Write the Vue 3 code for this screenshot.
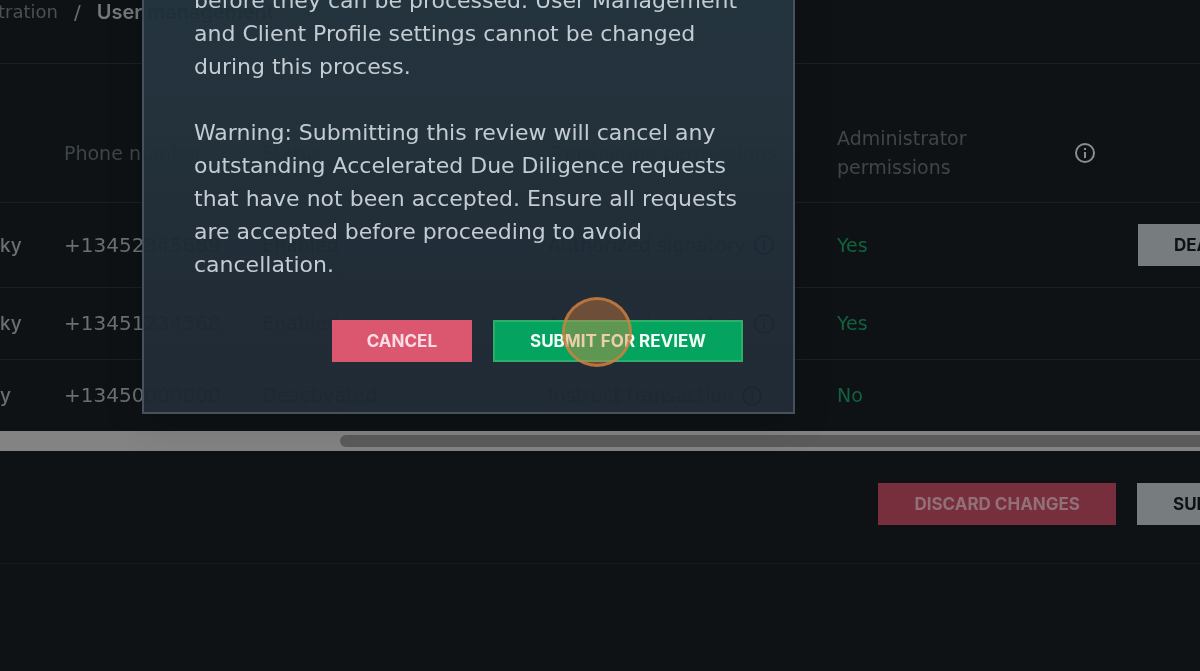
<script setup>
const rows = [
  { name: 'ky', phone: '+13452345689', status: 'Enabled', transaction: 'Authorized signatory', admin: 'Yes', action: 'DEACTIVATE', size: 'tall' },
  { name: 'ky', phone: '+13451234568', status: 'Enabled', transaction: 'Authorized signatory', admin: 'Yes', action: '', size: '' },
  { name: 'y', phone: '+13450000000', status: 'Deactivated', transaction: 'Instruct transaction', admin: 'No', action: '', size: '' }
]
const notice = [
  'before they can be processed. User Management',
  'and Client Profile settings cannot be changed',
  'during this process.'
]
const warning = [
  'Warning: Submitting this review will cancel any',
  'outstanding Accelerated Due Diligence requests',
  'that have not been accepted. Ensure all requests',
  'are accepted before proceeding to avoid',
  'cancellation.'
]
</script>

<template>
  <div class="page">
    <nav class="crumbs" aria-label="Breadcrumb">
      <a href="#">tration</a>
      <span class="slash">/</span>
      <strong>User management</strong>
    </nav>

    <main>
      <table>
        <colgroup>
          <col class="c-name"><col class="c-phone"><col class="c-status"><col class="c-trans"><col class="c-admin"><col>
        </colgroup>
        <thead>
          <tr>
            <th></th>
            <th>Phone number</th>
            <th>Status</th>
            <th>Transaction permissions</th>
            <th>
              <div class="admin-head">
                <span>Administrator permissions</span>
                <svg class="info bright" viewBox="0 0 20 20" aria-hidden="true"><circle cx="10" cy="10" r="9" /><path d="M10 9v6M10 5v2" /></svg>
              </div>
            </th>
            <th></th>
          </tr>
        </thead>
        <tbody>
          <tr v-for="row in rows" :key="row.phone" :class="row.size">
            <td class="name">{{ row.name }}</td>
            <td class="phone">{{ row.phone }}</td>
            <td class="dim">{{ row.status }}</td>
            <td class="dim">
              <div class="permission">
                <span>{{ row.transaction }}</span>
                <svg class="info" viewBox="0 0 20 20" aria-hidden="true"><circle cx="10" cy="10" r="9" /><path d="M10 9v6M10 5v2" /></svg>
              </div>
            </td>
            <td class="yes">{{ row.admin }}</td>
            <td><button v-if="row.action" class="btn grey" type="button">{{ row.action }}</button></td>
          </tr>
        </tbody>
      </table>
      <div class="track"><div class="thumb"></div></div>
      <div class="page-actions">
        <button class="btn discard" type="button">DISCARD CHANGES</button>
        <button class="btn grey" type="button">SUBMIT FOR REVIEW</button>
      </div>
    </main>

    <section class="modal" role="dialog" aria-label="Submit for review">
      <p><span v-for="line in notice" :key="line">{{ line }}</span></p>
      <p><span v-for="line in warning" :key="line">{{ line }}</span></p>
      <div class="modal-actions">
        <button class="btn cancel" type="button">CANCEL</button>
        <button class="btn submit" type="button">SUBMIT FOR REVIEW</button>
      </div>
    </section>
    <div class="pointer"></div>
  </div>
</template>

<style>
body { margin: 0; background: #0e1215; }
</style>

<style scoped>
.page {
  position: relative;
  min-height: 100vh;
  overflow: hidden;
  background: #0e1215;
  color: #6b6f72;
  font: 19px/29px "DejaVu Sans", Inter, sans-serif;
}
.crumbs {
  box-sizing: border-box;
  display: flex;
  align-items: flex-start;
  height: 64px;
  border-bottom: 1px solid #1a1f22;
  font-size: 18px;
  line-height: 24px;
  white-space: nowrap;
}
.crumbs a { margin-left: -2px; color: #4b5053; text-decoration: none; }
.crumbs strong { color: #74787b; font: 600 20px/24px Inter, sans-serif; }
.slash { margin: 0 16px; font-size: 20px; }
table { width: 100%; table-layout: fixed; border-collapse: separate; border-spacing: 0; }
.c-name { width: 64px; }
.c-phone { width: 198px; }
.c-status { width: 286px; }
.c-trans { width: 289px; }
.c-admin { width: 301px; }
th, td { box-sizing: border-box; padding: 0; text-align: left; white-space: nowrap; vertical-align: middle; }
th { height: 139px; padding-top: 40px; border-bottom: 1px solid #1a1f22; color: #3f4549; font-size: 19px; font-weight: 400; }
td { height: 72px; border-bottom: 1px solid #1a1f22; }
.tall td { height: 85px; }
tr:last-child td { height: 71px; border-bottom: 0; }
.name { font: 500 19px/29px Inter, sans-serif; }
.phone { font-size: 20px; }
.dim { color: #6b6f72; }
.yes { color: #12613f; }
.admin-head { display: flex; align-items: center; justify-content: space-between; padding-right: 43px; }
.admin-head span { width: 150px; white-space: normal; }
.permission { display: flex; align-items: center; gap: 8px; }
.info { width: 20px; height: 20px; flex: none; fill: none; stroke: #96999b; stroke-width: 2; }
.bright { stroke: #8b8e91; }
.track { padding: 4px 0 4px 340px; background: #838383; }
.thumb { height: 12px; border-radius: 6px 0 0 6px; background: #5b5b5b; }
.page-actions {
  display: flex;
  justify-content: flex-end;
  gap: 21px;
  margin-right: -183px;
  padding: 32px 0 38px;
  border-bottom: 1px solid #13191c;
}
.btn {
  box-sizing: border-box;
  flex: none;
  height: 42px;
  padding: 0 36px;
  border: 0;
  font: 700 17px/20px Inter, "Liberation Sans", sans-serif;
  white-space: nowrap;
}
.grey { background: #777c7e; color: #0e1215; }
.discard { background: #782f3d; color: #927078; }
.page-actions .btn { margin-right: 0; }
.cancel { padding: 0 35px; background: #db5770; color: #fbdde3; }
.submit { border: 2px solid #2cb069; padding: 0 35px; background: #05a360; color: #f2fff8; }
.page-actions { margin-right: -187px; padding-right: 2px; }
.modal {
  box-sizing: border-box;
  position: absolute;
  top: -70px;
  left: 142px;
  width: 653px;
  padding: 52px 50px 50px;
  border: 2px solid #46515b;
  background: linear-gradient(rgba(29, 46, 56, .97), rgba(28, 43, 53, .97) 40%, rgba(26, 38, 49, .97) 70%, rgba(26, 36, 47, .97));
  backdrop-filter: invert(1);
  box-shadow: 0 8px 36px rgba(0, 0, 0, .15);
  color: #c4ccd3;
  font-size: 22px;
  line-height: 33px;
}
.modal p { margin: 0 0 33px; white-space: nowrap; }
.modal p span { display: block; }
.modal-actions { display: flex; justify-content: flex-end; gap: 21px; margin-top: 39px; }
.pointer {
  box-sizing: border-box;
  position: absolute;
  top: 297px;
  left: 562px;
  width: 70px;
  height: 70px;
  border: 3px solid rgba(210, 130, 62, .75);
  border-radius: 50%;
  background: rgba(224, 132, 60, .4);
}
</style>
